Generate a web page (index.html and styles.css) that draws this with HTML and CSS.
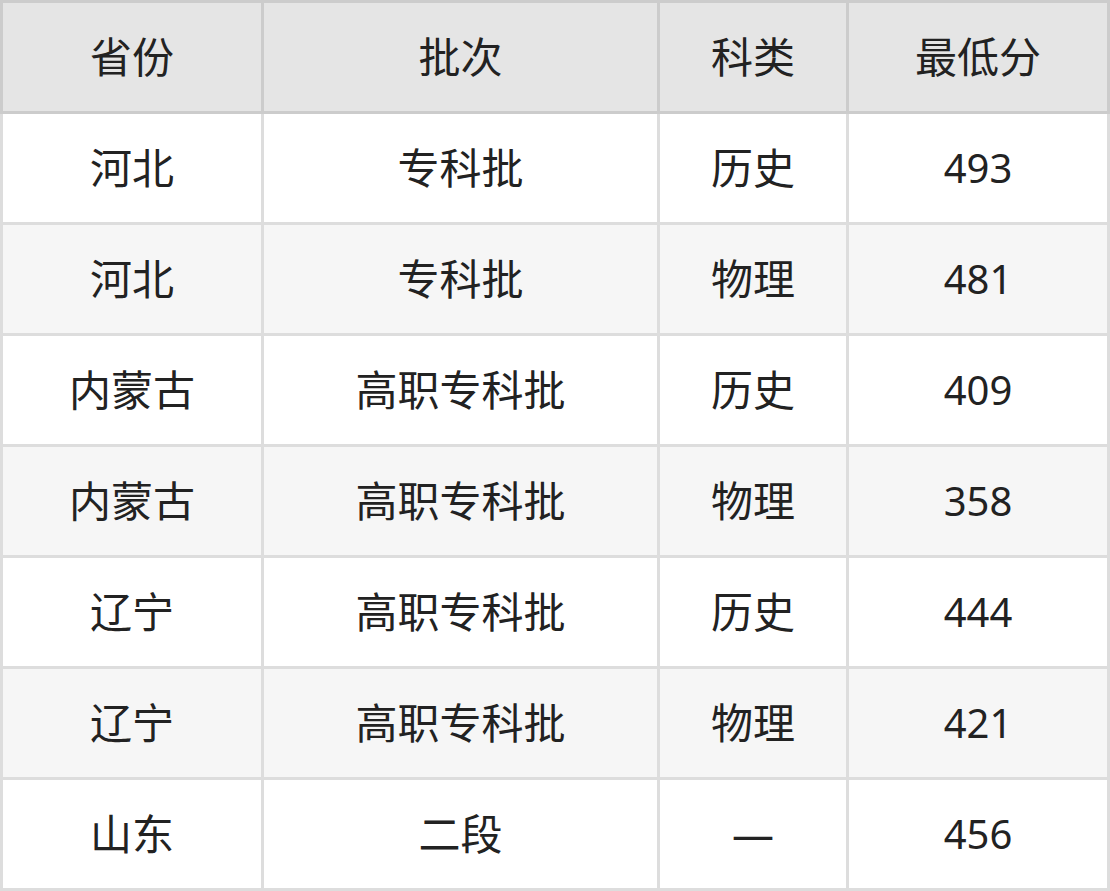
FILE: index.html
```html
<!DOCTYPE html>
<html lang="zh-CN">
<head>
<meta charset="utf-8">
<title>分数线</title>
<link rel="stylesheet" href="styles.css">
</head>
<body>
<div class="table">
  <div class="grid head">
    <div class="cell">省份</div>
    <div class="cell">批次</div>
    <div class="cell">科类</div>
    <div class="cell">最低分</div>
  </div>
  <div class="grid body">
    <div class="row"><div class="cell">河北</div><div class="cell">专科批</div><div class="cell">历史</div><div class="cell num">493</div></div>
    <div class="row alt"><div class="cell">河北</div><div class="cell">专科批</div><div class="cell">物理</div><div class="cell num">481</div></div>
    <div class="row"><div class="cell">内蒙古</div><div class="cell">高职专科批</div><div class="cell">历史</div><div class="cell num">409</div></div>
    <div class="row alt"><div class="cell">内蒙古</div><div class="cell">高职专科批</div><div class="cell">物理</div><div class="cell num">358</div></div>
    <div class="row"><div class="cell">辽宁</div><div class="cell">高职专科批</div><div class="cell">历史</div><div class="cell num">444</div></div>
    <div class="row alt"><div class="cell">辽宁</div><div class="cell">高职专科批</div><div class="cell">物理</div><div class="cell num">421</div></div>
    <div class="row"><div class="cell">山东</div><div class="cell">二段</div><div class="cell">—</div><div class="cell num">456</div></div>
  </div>
</div>
</body>
</html>
```
FILE: styles.css
```css
html, body {
  margin: 0;
  padding: 0;
  background: #ffffff;
}

.table {
  width: 1110px;
  display: flex;
  flex-direction: column;
  font-family: "Noto Sans", "Noto Sans CJK SC", sans-serif;
  font-size: 42px;
  color: #222222;
}

.grid {
  display: grid;
  grid-template-columns: 258px 393px 186px 258px;
  gap: 3px;
}

.head {
  background: #cccccc;
  padding: 3px;
}

.head .cell {
  background: #e5e5e5;
}

.body {
  background: #dddddd;
  padding: 0 3px 3px;
}

.row {
  display: contents;
}

.cell {
  height: 108px;
  display: flex;
  align-items: center;
  justify-content: center;
  background: #ffffff;
  line-height: 1;
}

.cell.num {
  font-size: 40px;
}

.row.alt .cell {
  background: #f6f6f6;
}
```
